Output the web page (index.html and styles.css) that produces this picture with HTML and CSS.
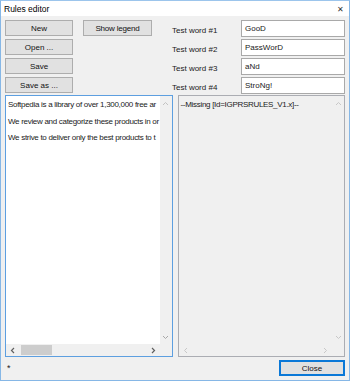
FILE: index.html
```html
<!DOCTYPE html>
<html>
<head>
<meta charset="utf-8">
<link rel="stylesheet" href="styles.css">
</head>
<body>
<div class="window">
  <div class="titlebar">
    <span class="title">Rules editor</span>
    <span class="close-x">✕</span>
  </div>
  <div class="content">
    <div class="top">
      <div class="btn-col">
        <button class="btn">New</button>
        <button class="btn">Open ...</button>
        <button class="btn">Save</button>
        <button class="btn">Save as ...</button>
      </div>
      <div class="legend-col">
        <button class="btn legend">Show legend</button>
      </div>
      <div class="words">
        <div class="word-row"><span class="label">Test word #1</span><div class="tbox">GooD</div></div>
        <div class="word-row"><span class="label">Test word #2</span><div class="tbox">PassWorD</div></div>
        <div class="word-row"><span class="label">Test word #3</span><div class="tbox">aNd</div></div>
        <div class="word-row"><span class="label">Test word #4</span><div class="tbox">StroNg!</div></div>
      </div>
    </div>
    <div class="editors">
      <div class="editor focused">
        <div class="ed-main">
          <div class="ed-text">
            <div class="line">Softpedia is a library of over 1,300,000 free ar</div>
            <div class="line">We review and categorize these products in or</div>
            <div class="line">We strive to deliver only the best products to t</div>
          </div>
          <div class="vscroll">
            <svg class="arr" width="7" height="5" viewBox="0 0 7 5"><path d="M1 4 L3.5 1.5 L6 4" fill="none" stroke="#c2c2c2" stroke-width="1"/></svg>
            <svg class="arr" width="7" height="5" viewBox="0 0 7 5"><path d="M1 1 L3.5 3.5 L6 1" fill="none" stroke="#a8a8a8" stroke-width="1"/></svg>
          </div>
        </div>
        <div class="hrow">
          <div class="hscroll">
            <svg class="arr" width="5" height="7" viewBox="0 0 5 7"><path d="M4 1 L1.5 3.5 L4 6" fill="none" stroke="#606060" stroke-width="1.2"/></svg>
            <div class="track"><div class="thumb"></div></div>
            <svg class="arr" width="5" height="7" viewBox="0 0 5 7"><path d="M1 1 L3.5 3.5 L1 6" fill="none" stroke="#606060" stroke-width="1.2"/></svg>
          </div>
          <div class="corner"></div>
        </div>
      </div>
      <div class="editor readonly">
        <div class="ed-main">
          <div class="ed-text">
            <div class="line">--Missing [Id=IGPRSRULES_V1.x]--</div>
          </div>
          <div class="vscroll">
            <svg class="arr" width="7" height="5" viewBox="0 0 7 5"><path d="M1 4 L3.5 1.5 L6 4" fill="none" stroke="#c8c8c8" stroke-width="1"/></svg>
            <svg class="arr" width="7" height="5" viewBox="0 0 7 5"><path d="M1 1 L3.5 3.5 L6 1" fill="none" stroke="#c8c8c8" stroke-width="1"/></svg>
          </div>
        </div>
        <div class="hrow">
          <div class="hscroll">
            <svg class="arr" width="5" height="7" viewBox="0 0 5 7"><path d="M4 1 L1.5 3.5 L4 6" fill="none" stroke="#c8c8c8" stroke-width="1"/></svg>
            <div class="track"></div>
            <svg class="arr" width="5" height="7" viewBox="0 0 5 7"><path d="M1 1 L3.5 3.5 L1 6" fill="none" stroke="#c8c8c8" stroke-width="1"/></svg>
          </div>
          <div class="corner"></div>
        </div>
      </div>
    </div>
    <div class="footer">
      <span class="star">*</span>
      <button class="btn close-btn">Close</button>
    </div>
  </div>
</div>
</body>
</html>
```
FILE: styles.css
```css
* { box-sizing: border-box; }
html, body { margin: 0; padding: 0; background: #f0f0f0; }
body {
  font-family: "Liberation Sans", Arial, sans-serif;
  font-size: 8px;
  color: #1a1a1a;
}
.window {
  width: 350px;
  height: 381px;
  border: 1px solid #86b7e6;
  border-top-color: #9cc5ec;
  background: #f0f0f0;
  display: flex;
  flex-direction: column;
}
.titlebar {
  height: 15px;
  background: #ffffff;
  display: flex;
  align-items: center;
  justify-content: space-between;
  padding: 1px 5px 0 3px;
  flex: none;
}
.title { font-size: 8.5px; color: #000; }
.close-x { font-size: 8px; color: #333; }
.content {
  flex: 1;
  display: flex;
  flex-direction: column;
  padding: 4px 4px 3px 4px;
  min-width: 0;
}
.top {
  display: flex;
  height: 75px;
  flex: none;
}
.btn-col {
  width: 68px;
  display: flex;
  flex-direction: column;
  gap: 3px;
}
.btn {
  font-family: inherit;
  font-size: 8px;
  color: #111;
  height: 16px;
  padding: 0;
  margin: 0;
  background: #e1e1e1;
  border: 1px solid #adadad;
  border-radius: 0;
}
.legend-col { margin-left: 10px; width: 69px; }
.legend { width: 69px; letter-spacing: -0.2px; }
.words {
  margin-left: 20px;
  flex: 1;
  display: flex;
  flex-direction: column;
  gap: 2px;
}
.word-row {
  display: flex;
  align-items: center;
  height: 17px;
}
.label { width: 69px; padding-top: 3px; }
.tbox {
  flex: 1;
  height: 17px;
  background: #fff;
  border: 1px solid #a9a9a9;
  padding: 3px 0 0 3px;
}
.editors {
  display: flex;
  gap: 5px;
  height: 262px;
  flex: none;
  min-width: 0;
}
.editor {
  flex: 1 1 0;
  min-width: 0;
  display: flex;
  flex-direction: column;
  border: 1px solid #abadb3;
}
.editor.focused { border-color: #5d9fe0; background: #fff; }
.editor.readonly { background: #f0f0f0; }
.ed-main { flex: 1; display: flex; min-height: 0; min-width: 0; }
.ed-text {
  flex: 1;
  min-width: 0;
  overflow: hidden;
  white-space: nowrap;
  padding: 4px 0 0 2px;
  letter-spacing: -0.3px;
}
.line { height: 16.5px; line-height: 10px; }
.vscroll {
  width: 12px;
  flex: none;
  background: #f0f0f0;
  display: flex;
  flex-direction: column;
  justify-content: space-between;
  align-items: center;
  padding: 5px 0 4px;
}
.readonly .vscroll { background: transparent; }
.hrow { display: flex; height: 12px; flex: none; }
.hscroll {
  flex: 1;
  background: #f0f0f0;
  display: flex;
  align-items: center;
  padding: 0 4px;
}
.readonly .hscroll { background: transparent; }
.track { flex: 1; height: 10px; padding-left: 6px; display: flex; }
.thumb { width: 31px; height: 10px; background: #cdcdcd; }
.corner { width: 12px; background: #f0f0f0; }
.footer {
  flex: 1;
  display: flex;
  align-items: center;
  justify-content: space-between;
  padding-top: 2px;
}
.star { padding-left: 2px; font-size: 9px; }
.close-btn {
  width: 66px;
  height: 16px;
  border: 2px solid #0a78d7;
}
.arr { display: block; }
```
